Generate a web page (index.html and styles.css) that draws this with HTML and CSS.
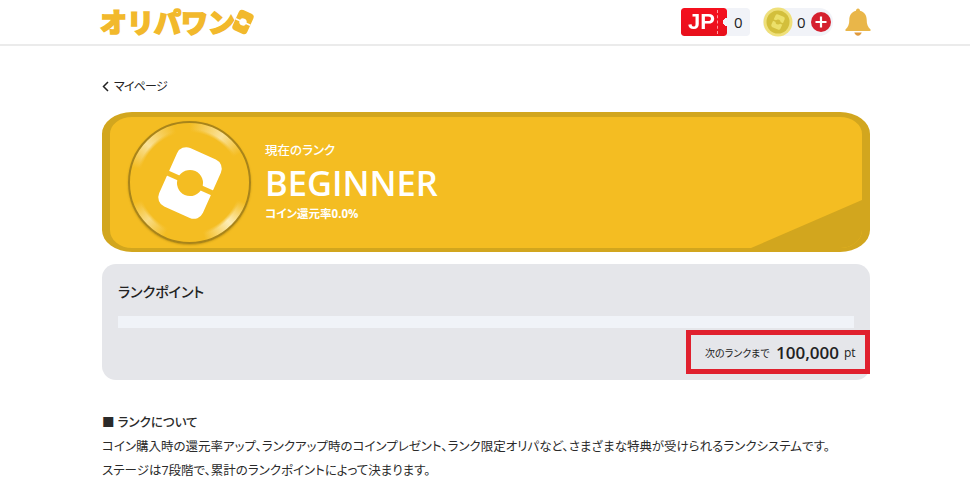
FILE: index.html
```html
<!DOCTYPE html>
<html lang="ja">
<head>
  <meta charset="UTF-8" />
  <title>オリパワン</title>
  <link rel="stylesheet" href="styles.css">
</head>
<body>
  <header class="site-header">
    <div class="container header-row">
      <div class="logo">
        <span class="logo-text">オリパワン</span>
        <svg class="logo-mark" width="22" height="26" viewBox="0 0 22 26">
          <g transform="rotate(24 11 13)">
            <rect x="3" y="2" width="16" height="22" rx="3.500" fill="#f2b92c" />
            <rect x="3" y="12.200" width="16" height="1.600" fill="#fff" />
            <circle cx="11" cy="13" r="3.600" fill="#fff" />
          </g>
        </svg>
      </div>
      <div class="header-right">
        <div class="counter">
          <span class="ticket">JP</span>
          <span class="counter-num">0</span>
        </div>
        <div class="coin-pill">
          <svg class="coin" width="30" height="30" viewBox="0 0 30 30">
            <circle cx="15" cy="15" r="14.500" fill="#efe07a" />
            <circle cx="15" cy="15" r="11.500" fill="#d3bf3c" />
            <g transform="rotate(24 15 15)" fill="#ece06a">
              <rect x="10" y="8" width="10" height="14" rx="2" />
            </g>
            <path d="M9.500 12.800 L20.500 17.200" stroke="#d3bf3c" stroke-width="1.500" />
            <circle cx="15" cy="15" r="2.500" fill="#d3bf3c" />
          </svg>
          <span class="coin-num">0</span>
          <svg class="plus" width="20" height="20" viewBox="0 0 20 20">
            <circle cx="10" cy="10" r="10" fill="#d5202e" />
            <path d="M10 4.500 V15.500 M4.500 10 H15.500" stroke="#fff" stroke-width="2.200" />
          </svg>
        </div>
        <svg class="bell" width="26" height="28" viewBox="0 0 26 28">
          <path d="M13 0.500 c1.300 0 2 1 2 2.300 c4.400 1 6.700 4.600 6.700 9 c0 4.600 1 7 3.800 9.700 c0.500 0.700 0.200 1.500 -0.800 1.500 H1.300 c-1 0 -1.300 -0.800 -0.800 -1.500 c2.800 -2.700 3.800 -5.100 3.800 -9.700 c0 -4.400 2.300 -8 6.700 -9 c0 -1.300 0.700 -2.300 2 -2.300 z" fill="#e9b649" />
          <path d="M9.300 24.500 h7.400 c-0.500 2 -2 3.200 -3.700 3.200 s-3.200 -1.200 -3.700 -3.200 z" fill="#e09a3e" />
        </svg>
      </div>
    </div>
  </header>

  <main class="container">
    <a class="back-link" href="#">
      <svg width="7" height="11" viewBox="0 0 7 11"><path d="M6 1 L1.500 5.500 L6 10" fill="none" stroke="#222" stroke-width="1.500" /></svg>
      マイページ
    </a>

    <section class="rank-card">
      <div class="rank-corner"></div>
      <div class="medal">
        <svg width="84" height="88" viewBox="0 0 84 88">
          <g transform="rotate(24 42 44)">
            <rect x="18" y="12" width="48" height="64" rx="10" fill="#fff" />
            <rect x="14" y="41.500" width="56" height="5" fill="#f4bd22" />
            <circle cx="42" cy="44" r="13" fill="#f4bd22" />
          </g>
        </svg>
      </div>
      <div class="rank-info">
        <p class="rank-label">現在のランク</p>
        <p class="rank-name">BEGINNER</p>
        <p class="rank-rate">コイン還元率0.0%</p>
      </div>
    </section>

    <section class="point-panel">
      <h2>ランクポイント</h2>
      <div class="point-bar"></div>
      <div class="next-rank">
        <span class="next-label">次のランクまで</span>
        <span class="next-value">100,000</span>
        <span class="next-unit">pt</span>
      </div>
    </section>

    <section class="about">
      <h3>■ ランクについて</h3>
      <p>コイン購入時の還元率アップ、ランクアップ時のコインプレゼント、ランク限定オリパなど、さまざまな特典が受けられるランクシステムです。</p>
      <p>ステージは7段階で、累計のランクポイントによって決まります。</p>
    </section>
  </main>
</body>
</html>
```

FILE: styles.css
```css
body {
  margin: 0;
  height: 480px;
  overflow: hidden;
  background: #fff;
  color: #222;
  font-family: "Open Sans", "Noto Sans CJK JP", sans-serif;
  font-feature-settings: "palt";
}

p, h2, h3 {
  margin: 0;
}

.container {
  width: 768px;
  margin-left: 102px;
}

.site-header {
  height: 44px;
  border-bottom: 2px solid #ebebeb;
}

.header-row {
  display: flex;
  justify-content: space-between;
  align-items: center;
  height: 44px;
}

.logo {
  display: flex;
  align-items: center;
  margin-left: -2px;
}

.logo-text {
  font-family: "Noto Sans CJK JP", sans-serif;
  font-weight: 900;
  font-size: 27px;
  line-height: 30px;
  color: #f2b92c;
  -webkit-text-stroke: 1.5px #f2b92c;
  font-feature-settings: normal;
}

.logo-mark {
  margin-left: -3px;
}

.header-right {
  display: flex;
  align-items: center;
  margin-right: -1px;
}

.counter {
  display: flex;
  align-items: center;
  width: 69px;
  height: 28px;
  background: #f1f3f8;
  border-radius: 4px;
}

.ticket {
  position: relative;
  display: block;
  width: 46px;
  height: 28px;
  padding-left: 7px;
  box-sizing: border-box;
  background: linear-gradient(#f5101e, #e8101c);
  border-radius: 3px;
  color: #fff;
  font: bold 22px/28px "Liberation Sans", sans-serif;
  -webkit-mask: radial-gradient(circle 4px at 100% 50%, transparent 98%, #000 100%);
  mask: radial-gradient(circle 4px at 100% 50%, transparent 98%, #000 100%);
}

.ticket::after {
  content: "";
  position: absolute;
  left: 36px;
  top: 2px;
  bottom: 2px;
  border-left: 1px dashed #ff9aa0;
}

.counter-num, .coin-num {
  font-size: 15px;
  color: #222;
}

.counter-num {
  margin-left: 7px;
}

.coin-pill {
  display: flex;
  align-items: center;
  height: 28px;
  width: 70px;
  margin-left: 13px;
  background: #f1f3f8;
  border-radius: 14px;
}

.coin {
  flex: none;
}

.coin-num {
  margin-left: 4px;
}

.plus {
  margin-left: 5px;
  flex: none;
}

.bell {
  margin-left: 12px;
}

.back-link {
  display: flex;
  align-items: center;
  gap: 5px;
  margin-top: 30px;
  height: 20px;
  font-size: 12px;
  letter-spacing: -0.8px;
  color: #222;
  text-decoration: none;
}

.rank-card {
  position: relative;
  display: flex;
  align-items: center;
  box-sizing: border-box;
  height: 140px;
  margin-top: 16px;
  padding-left: 18px;
  background: #f4bd22;
  border: solid #d2a61e;
  border-width: 5px 8px 4px;
  border-radius: 30px / 22px;
  overflow: hidden;
}

.rank-corner {
  position: absolute;
  right: 0;
  bottom: 0;
  width: 111px;
  height: 48px;
  background: #d2a61e;
  clip-path: polygon(100% 0, 100% 100%, 0 100%);
}

.medal {
  display: flex;
  justify-content: center;
  align-items: center;
  flex: none;
  box-sizing: border-box;
  width: 123px;
  height: 123px;
  border: 2px solid #a8841a;
  border-radius: 50%;
  background:
    radial-gradient(circle closest-side, #f4bd22 84%, rgba(244, 189, 34, 0) 90%),
    conic-gradient(#f4bd22 0deg, #fae29a 35deg, #f4bd22 60deg, #f4bd22 110deg, #fdeeb9 135deg, #f4bd22 165deg, #f4bd22 205deg, #f9dc84 228deg, #f4bd22 250deg, #f4bd22 285deg, #fae29a 312deg, #f4bd22 345deg);
  box-shadow: 0 1px 2px rgba(120, 90, 0, 0.4);
}

.rank-info {
  margin-left: 14px;
  color: #fff;
}

.rank-label {
  margin-bottom: 1px;
  font-size: 12.5px;
  line-height: 14px;
  font-weight: 500;
}

.rank-name {
  font-size: 34.5px;
  line-height: 48px;
  font-weight: 600;
}

.rank-rate {
  font-size: 11.5px;
  line-height: 14px;
  font-weight: 700;
}

.point-panel {
  position: relative;
  box-sizing: border-box;
  height: 116px;
  margin-top: 12px;
  padding: 16px;
  background: #e5e6ea;
  border-radius: 14px;
}

.point-panel h2 {
  font-size: 14px;
  line-height: 24px;
  font-weight: 500;
}

.point-bar {
  height: 12px;
  margin-top: 12px;
  background: #f0f3f8;
}

.next-rank {
  position: absolute;
  right: 0;
  top: 66px;
  box-sizing: border-box;
  display: flex;
  align-items: center;
  width: 184px;
  height: 44px;
  padding-left: 14px;
  border: 5px solid #e0202e;
}

.next-label {
  font-size: 10px;
  width: 71px;
}

.next-value {
  font-size: 17px;
  font-weight: 600;
}

.next-unit {
  margin-left: 5px;
  font-size: 12px;
  font-weight: 500;
}

.about {
  margin-top: 31px;
  font-size: 12.5px;
  color: #2a2a2a;
}

.about h3 {
  font-size: 12.5px;
  line-height: 24px;
  font-weight: 500;
}

.about p {
  line-height: 24px;
}
```
